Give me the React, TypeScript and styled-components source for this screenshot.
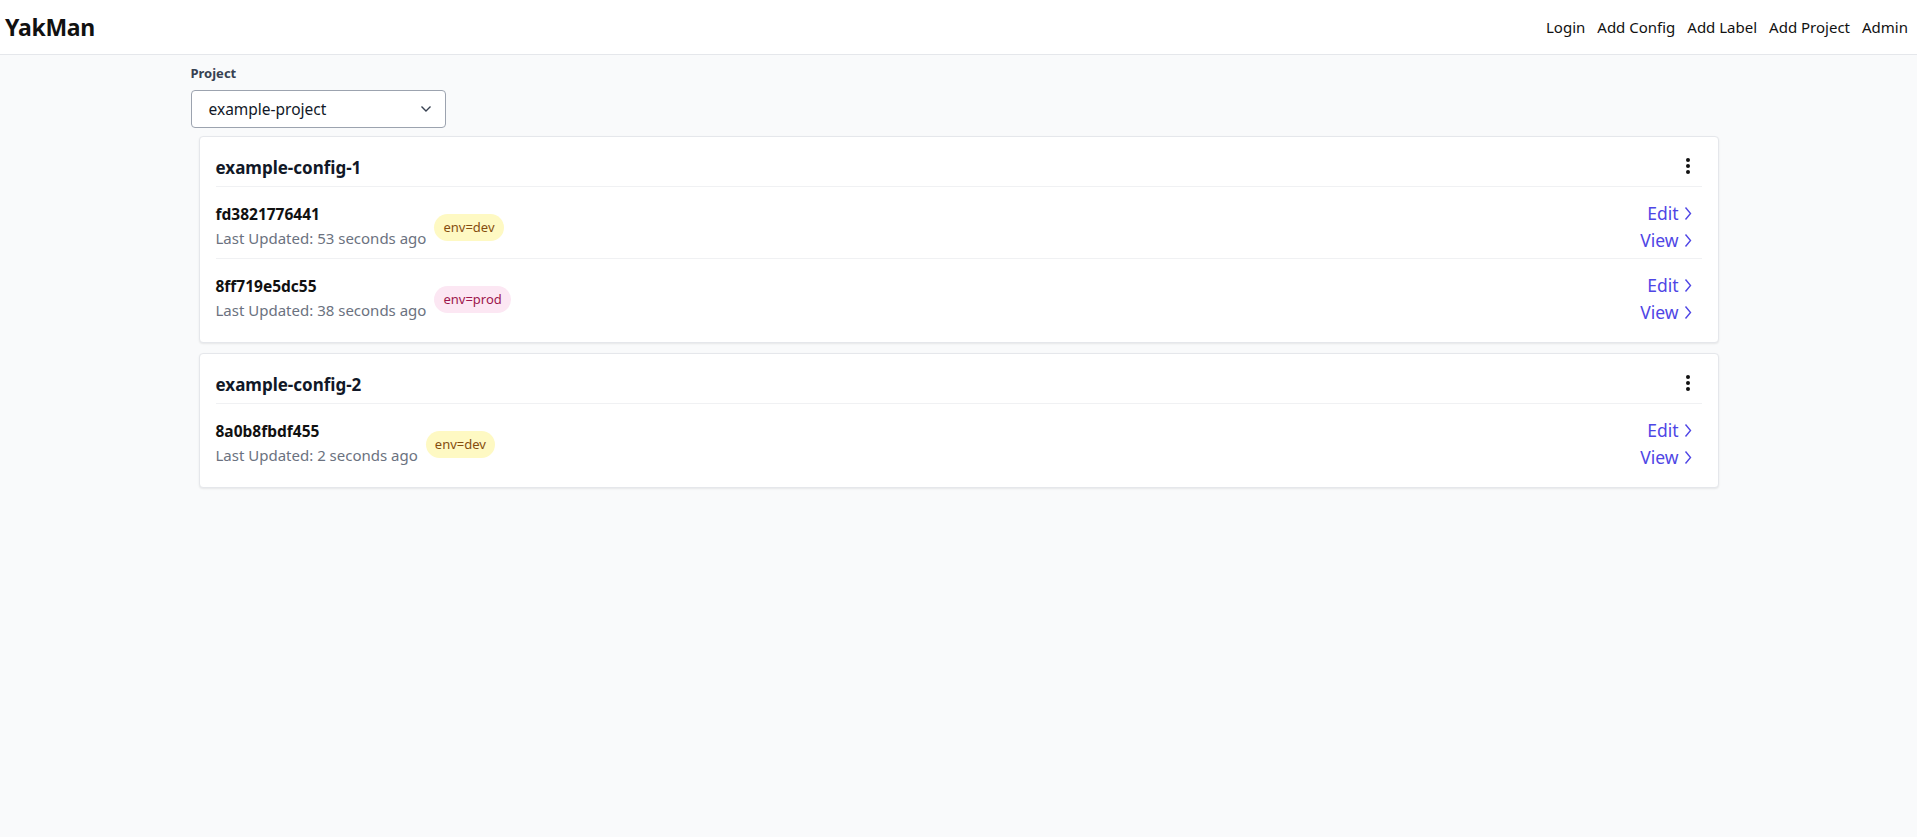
import React from 'react';
import styled, { createGlobalStyle } from 'styled-components';

const GlobalStyle = createGlobalStyle`
  * { box-sizing: border-box; }
  body {
    margin: 0;
    background: #f9fafb;
    font-family: "Noto Sans", "Open Sans", sans-serif;
    color: #111827;
  }
`;

const Header = styled.header`
  height: 55px;
  background: #ffffff;
  border-bottom: 1px solid #e5e7eb;
  display: flex;
  align-items: center;
  justify-content: space-between;
  padding: 0 9px 0 5px;
`;

const Logo = styled.div`
  font-size: 23px;
  font-weight: 700;
  color: #111;
  letter-spacing: -0.3px;
`;

const Nav = styled.nav`
  display: flex;
  gap: 12px;
`;

const NavLink = styled.a`
  font-size: 15px;
  color: #111;
  text-decoration: none;
  cursor: pointer;
`;

const Main = styled.main`
  max-width: 1536px;
  margin: 0 auto;
  padding-top: 9px;
`;

const Label = styled.label`
  display: block;
  font-size: 13px;
  font-weight: 700;
  color: #374151;
  margin-bottom: 8px;
`;

const SelectWrap = styled.div`
  width: 255px;
  height: 38px;
  border: 1px solid #9ca3af;
  border-radius: 4px;
  background: #fff;
  display: flex;
  align-items: center;
  justify-content: space-between;
  padding: 0 13px 0 17px;
  font-size: 15.5px;
  color: #111827;
  margin-bottom: 8px;
`;

const Card = styled.section`
  margin: 0 8px 10px;
  background: #fff;
  border: 1px solid #e5e7eb;
  border-radius: 4px;
  box-shadow: 0 1px 2px rgba(0, 0, 0, 0.08);
  padding: 0 16px 12px;
`;

const CardHead = styled.div`
  display: flex;
  justify-content: space-between;
  align-items: flex-start;
  padding-top: 17px;
  padding-bottom: 4px;
  border-bottom: 1px solid #f0f1f3;
`;

const CardTitle = styled.h2`
  margin: 0;
  font-size: 17px;
  line-height: 28px;
  font-weight: 700;
  color: #111827;
`;

const Kebab = styled.button`
  border: none;
  background: none;
  padding: 0;
  margin: 2px 11px 0 0;
  height: 20px;
  display: flex;
  align-items: center;
`;

const Row = styled.div<{ $last?: boolean }>`
  display: flex;
  align-items: center;
  justify-content: space-between;
  padding: 13px 0 4px;
  border-bottom: ${p => (p.$last ? 'none' : '1px solid #f0f1f3')};
`;

const RowInfo = styled.div`
  display: flex;
  align-items: center;
  gap: 8px;
`;

const Meta = styled.div`
  display: flex;
  flex-direction: column;
`;

const Hash = styled.div`
  font-size: 15.5px;
  line-height: 23px;
  font-weight: 700;
  color: #111;
`;

const Updated = styled.div`
  font-size: 15px;
  line-height: 25px;
  color: #6b7280;
`;

const Badge = styled.span<{ $tone: 'dev' | 'prod' }>`
  display: inline-flex;
  align-items: center;
  height: 27px;
  padding: 0 9px;
  border-radius: 14px;
  font-size: 13px;
  background: ${p => (p.$tone === 'dev' ? '#fef9c3' : '#fce7f3')};
  color: ${p => (p.$tone === 'dev' ? '#854d0e' : '#9d174d')};
`;

const Actions = styled.div`
  display: flex;
  flex-direction: column;
  align-items: flex-end;
  margin-right: 10px;
`;

const ActionLink = styled.a`
  display: flex;
  align-items: center;
  gap: 5px;
  font-size: 17.5px;
  line-height: 27px;
  color: #4f46e5;
  text-decoration: none;
  cursor: pointer;
`;

const Chevron = ({ dir }: { dir: 'right' | 'down' }) =>
  dir === 'right' ? (
    <svg width="8" height="15" viewBox="0 0 8 15" fill="none">
      <path d="M1.5 1.5L6.5 7.5L1.5 13.5" stroke="#4f46e5" strokeWidth="1.4" />
    </svg>
  ) : (
    <svg width="12" height="8" viewBox="0 0 12 8" fill="none">
      <path d="M1.5 1.5L6 6L10.5 1.5" stroke="#374151" strokeWidth="1.4" />
    </svg>
  );

const Dots = () => (
  <svg width="6" height="18" viewBox="0 0 6 18">
    <circle cx="3" cy="3" r="2" fill="#111" />
    <circle cx="3" cy="9" r="2" fill="#111" />
    <circle cx="3" cy="15" r="2" fill="#111" />
  </svg>
);

type Instance = { id: string; updated: string; env: 'dev' | 'prod' };

const configs: { name: string; instances: Instance[] }[] = [
  {
    name: 'example-config-1',
    instances: [
      { id: 'fd3821776441', updated: '53 seconds ago', env: 'dev' },
      { id: '8ff719e5dc55', updated: '38 seconds ago', env: 'prod' },
    ],
  },
  {
    name: 'example-config-2',
    instances: [{ id: '8a0b8fbdf455', updated: '2 seconds ago', env: 'dev' }],
  },
];

export default function App() {
  return (
    <>
      <GlobalStyle />
      <Header>
        <Logo>YakMan</Logo>
        <Nav>
          {['Login', 'Add Config', 'Add Label', 'Add Project', 'Admin'].map(l => (
            <NavLink key={l}>{l}</NavLink>
          ))}
        </Nav>
      </Header>
      <Main>
        <Label>Project</Label>
        <SelectWrap>
          <span>example-project</span>
          <Chevron dir="down" />
        </SelectWrap>
        {configs.map(c => (
          <Card key={c.name}>
            <CardHead>
              <CardTitle>{c.name}</CardTitle>
              <Kebab>
                <Dots />
              </Kebab>
            </CardHead>
            {c.instances.map((inst, i) => (
              <Row key={inst.id} $last={i === c.instances.length - 1}>
                <RowInfo>
                  <Meta>
                    <Hash>{inst.id}</Hash>
                    <Updated>Last Updated: {inst.updated}</Updated>
                  </Meta>
                  <Badge $tone={inst.env}>env={inst.env}</Badge>
                </RowInfo>
                <Actions>
                  <ActionLink>
                    Edit <Chevron dir="right" />
                  </ActionLink>
                  <ActionLink>
                    View <Chevron dir="right" />
                  </ActionLink>
                </Actions>
              </Row>
            ))}
          </Card>
        ))}
      </Main>
    </>
  );
}
